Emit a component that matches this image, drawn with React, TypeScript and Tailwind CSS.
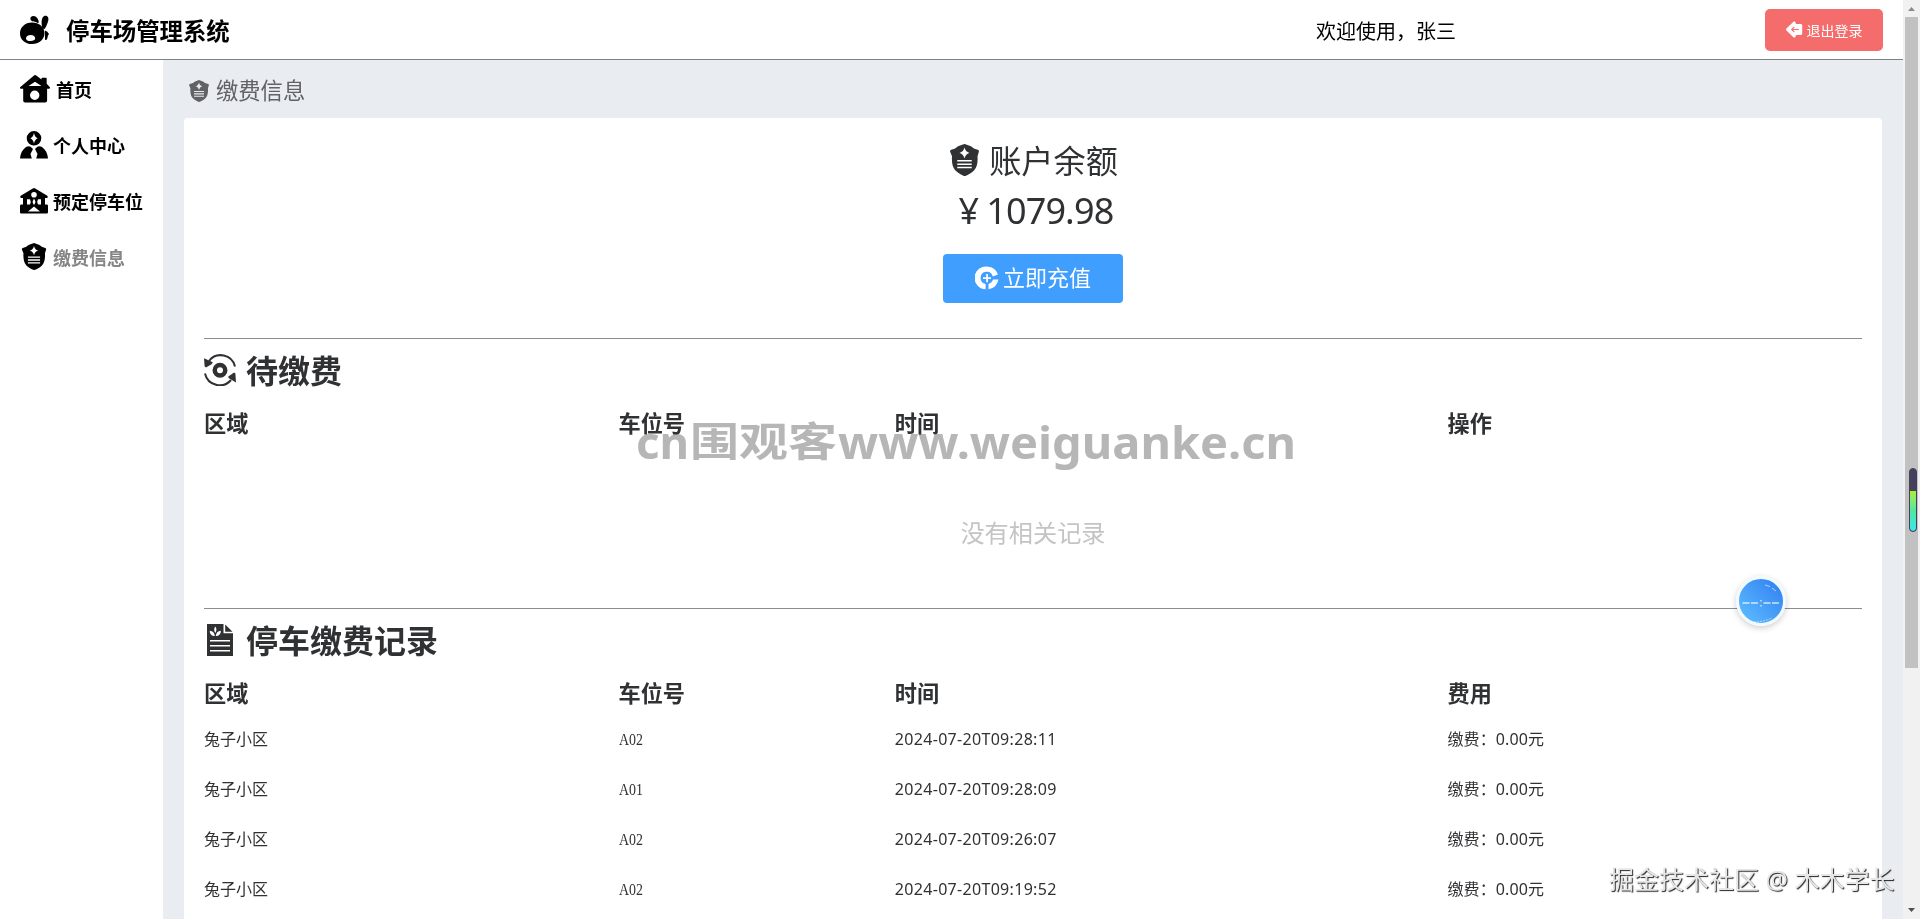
import type { ReactNode } from "react";

interface IconProps {
  className?: string;
}

const RabbitLogo = ({ className }: IconProps) => (
  <svg viewBox="0 0 30 30" className={className} fill="currentColor">
    <path d="M10.4 3.6C10.4 1.6 12 .8 13.7 1c2.600.3 4.600 2.600 5 5.400.1 1-.3 1.600-1 1.500l-2-1c-2-.3-5.300-.4-5.300-3.300Z" />
    <path d="M22.500 2.800C23.400.9 25.200.4 26.800 1c1.900.8 2.100 3.500 1 6.200-1 2.700-2 5.600-3.300 6.700-1.200.5-2.300-.7-2.600-2.700-.5-3-.4-6.300.6-8.400Z" />
    <path
      fillRule="evenodd"
      d="M12 7.500c7 0 12.500 4.700 12.500 10.800S19 29 12 29 0 24.500 0 18.400 5 7.500 12 7.500Zm-1.300 12.600c-2.800 0-4.700 1.500-4.700 3.400 0 1.600 2 2.600 4.600 2.600s4.600-1 4.600-2.500c0-2-1.700-3.500-4.500-3.500Z"
    />
    <path d="m25 15.500 2.300 1.200L29 19l-1 1.500-1 4-2 .5Z" />
  </svg>
);

const HomeIcon = ({ className }: IconProps) => (
  <svg viewBox="0 0 30 28" className={className} fill="currentColor">
    <path
      fillRule="evenodd"
      d="M14 .4a2 2 0 0 1 2.300 0l5.200 4V3.800c0-.6.4-1 1-1h3.200c.6 0 1 .4 1 1v5l3 3.200c.6.8.3 1.700-.6 1.700h-2v11.700c0 1.200-.8 2-2 2H5.200c-1.200 0-2-.8-2-2V13.700H.9c-1 0-1.200-1-.5-1.700ZM15 6.700l-6.500 4.200h13Zm-.3 8.800a4.700 4.700 0 1 0 0 9.400 4.700 4.700 0 0 0 0-9.400Z"
    />
  </svg>
);

const UserIcon = ({ className }: IconProps) => (
  <svg viewBox="0 0 28 28" className={className} fill="currentColor">
    <path
      fillRule="evenodd"
      d="M14 0a7.300 7.300 0 1 1 0 14.600A7.300 7.300 0 0 1 14 0Zm0 2c-.7 3-1.700 4.300-3.700 5.300 2 1 3 2.300 3.700 5.300.7-3 1.700-4.300 3.700-5.300-2-1-3-2.300-3.700-5.300Z"
    />
    <path d="M6 16c1.500-1 3.200-1.200 4.600-.3L13 18l-2.500 5 1.300 4.500H0C.3 22.500 2.500 18.500 6 16Z" />
    <path d="M22 16c-1.500-1-3.200-1.200-4.600-.3L15 18l2.500 5-1.300 4.500H28C27.700 22.500 25.500 18.500 22 16Z" />
  </svg>
);

const ParkingIcon = ({ className }: IconProps) => (
  <svg viewBox="0 0 28 26" className={className} fill="currentColor">
    <path
      fillRule="evenodd"
      d="M12.800.4a2.300 2.300 0 0 1 2.400 0l11.700 7.200c1.300.8 1 2.400-.4 2.500H25v6.500h1.500c1 0 1.500.5 1.500 1.500v6c0 1-.6 1.500-1.600 1.500H1.600C.6 25.600 0 25.100 0 24.100v-6c0-1 .5-1.500 1.500-1.500H3v-6.500H1.500C.1 10-.2 8.400 1.100 7.600ZM14 4a2.800 2.800 0 1 0 0 5.600A2.800 2.800 0 0 0 14 4ZM7 11.300v5.300h3l.8-2.600-.8-2.700Zm6.500 0-1 2.700 1 2.600h1l1-2.600-1-2.700Zm4.500 0-.8 2.700.8 2.600h3v-5.300ZM14 18.600l-6 5h12Z"
    />
  </svg>
);

const ShieldIcon = ({ className }: IconProps) => (
  <svg viewBox="0 0 28 31" className={className} fill="currentColor">
    <path
      fillRule="evenodd"
      d="M13.200.2a2 2 0 0 1 1.600 0l4.800 1.800c1.600.5 2.200 2 4 2.600l3.300 1c.9.300 1.200 1 1 1.900l-1.300 4.300c.4 5.800-.4 10.500-3.200 13.700-2.300 2.500-5.400 4.200-8 5.300-.9.300-1.500.3-2.400 0-2.500-1.100-5.600-2.800-8-5.300-2.700-3.200-3.500-7.900-3.100-13.700L.1 7.500c-.2-.9.1-1.600 1-1.900l3.300-1c1.800-.6 2.400-2.100 4-2.600ZM14 3.400c-.8 3-2 4.300-4.800 5.300 2.800 1 4 2.300 4.800 5.300.8-3 2-4.300 4.800-5.300-2.800-1-4-2.300-4.800-5.300ZM7 15.500V17h14v-1.500Zm0 3.300v1.500h14v-1.500Zm0 3.300v1.500h14v-1.500Z"
    />
  </svg>
);

const RechargeIcon = ({ className }: IconProps) => (
  <svg viewBox="0 0 24 24" className={className} fill="currentColor">
    <path d="M13.500.8A11.400 11.400 0 0 1 23 8.600l-5.200 1.800A6.200 6.200 0 1 0 10.600 18v5.300A11.400 11.400 0 1 1 13.500.8Z" />
    <path d="M23.400 13.600a11.400 11.400 0 0 1-9.900 9.700V18a6.200 6.200 0 0 0 4.500-4.400Z" />
    <path d="M11.200 8h1.700v3.200H16V13h-3.100v3.200h-1.700V13H8v-1.800h3.200Z" />
  </svg>
);

const LogoutIcon = ({ className }: IconProps) => (
  <svg viewBox="0 0 17 17" className={className}>
    <path
      fill="currentColor"
      d="M7.400.8C8.500-.1 9.500.5 9.700 2l.2.900h4.600c1 0 1.700.6 1.700 1.600v8c0 1-.7 1.600-1.700 1.600H9.900l-.2.900c-.2 1.500-1.200 2.100-2.300 1.200L.7 9.700C-.2 9-.2 8 .7 7.300Z"
    />
    <path d="M12.800 8.500H6M8.300 5.900 5.700 8.500l2.600 2.600" fill="none" stroke="#f56c6c" strokeWidth="1.200" />
  </svg>
);

const PendingIcon = ({ className }: IconProps) => (
  <svg viewBox="0 0 32 32" className={className} fill="currentColor">
    <path d="M5 7A14.700 14.700 0 0 1 31 12.500M1 19.500A15 15 0 0 0 27 26" fill="none" stroke="currentColor" strokeWidth="2" />
    <path d="M0 4.200 8.800 8.200 7.600 10.300 2 13.600.6 12.300ZM32 28.500 24.500 24l-.2-1.400 5.800-4 1.300.8Z" />
    <path fillRule="evenodd" d="M16 8.700a7.500 7.500 0 1 1 0 15 7.500 7.500 0 0 1 0-15Zm0 4.600a3 3 0 1 0 0 6 3 3 0 0 0 0-6Z" />
  </svg>
);

const RecordIcon = ({ className }: IconProps) => (
  <svg viewBox="0 0 26 32" className={className} fill="currentColor">
    <path
      fillRule="evenodd"
      d="M0 0h16.500v9.200H26V32H0Zm8.300 2.600c-1.500 2-1.500 4 0 6.300 1.500-2.300 1.500-4.300 0-6.300ZM2.800 6.700c-.2 3.200 1.700 5.200 5 5.300-.2-3-2-5.100-5-5.300Zm11 0c-3 .2-4.800 2.300-5 5.300 3.300-.1 5.200-2.100 5-5.300ZM3 16v1.400h20V16Zm0 5v1.400h20V21Zm0 5v1.400h20V26Z"
    />
    <path d="m18.200.5 7.300 7.200h-7.300Z" />
  </svg>
);

const menuItems = [
  { label: "首页", icon: HomeIcon, size: "w-[30px] h-7 -mt-[2px]", gap: "gap-[6px]" },
  { label: "个人中心", icon: UserIcon, size: "w-7 h-7 -mt-[2px]", gap: "gap-[5px]" },
  { label: "预定停车位", icon: ParkingIcon, size: "w-7 h-[26px] -mt-[2px]", gap: "gap-[5px]" },
  { label: "缴费信息", icon: ShieldIcon, size: "w-7 h-[27px] -mt-[3px]", gap: "gap-[5px]", active: true },
];

const records = [
  { area: "兔子小区", spot: "A02", time: "2024-07-20T09:28:11", fee: "0.00" },
  { area: "兔子小区", spot: "A01", time: "2024-07-20T09:28:09", fee: "0.00" },
  { area: "兔子小区", spot: "A02", time: "2024-07-20T09:26:07", fee: "0.00" },
  { area: "兔子小区", spot: "A02", time: "2024-07-20T09:19:52", fee: "0.00" },
];

const SectionTitle = ({ icon, children }: { icon: ReactNode; children: ReactNode }) => (
  <h2 className="flex h-[62px] items-center text-[32px] font-bold leading-none">
    <span className="mr-[10px] flex w-8 justify-center">{icon}</span>
    <span className="pt-px">{children}</span>
  </h2>
);

const TableHead = ({ titles }: { titles: string[] }) => (
  <div className="grid h-[42px] grid-cols-[6fr_4fr_8fr_6fr] items-center pt-[3px] text-[22.2px] font-bold">
    {titles.map((title) => (
      <span key={title}>{title}</span>
    ))}
  </div>
);

const Header = () => (
  <header className="flex h-[60px] shrink-0 items-center border-b border-[#7d828c] bg-white pl-5 pr-5 text-black">
    <RabbitLogo className="h-[30px] w-[30px]" />
    <h1 className="ml-4 pt-1 text-[23.4px] font-bold">停车场管理系统</h1>
    <span className="ml-auto pt-1 text-xl">欢迎使用，张三</span>
    <button className="ml-[309px] flex h-[42px] w-[118px] items-center justify-center gap-1 rounded-[5px] bg-[#f56c6c] text-sm text-white">
      <LogoutIcon className="h-[17px] w-[17px]" />
      <span className="pt-[2px]">退出登录</span>
    </button>
  </header>
);

const Sidebar = () => (
  <aside className="w-[163px] shrink-0 bg-white pl-5 pt-[2px] text-black">
    {menuItems.map((item) => (
      <a key={item.label} className={`flex h-14 items-center ${item.gap} whitespace-nowrap text-lg font-bold`}>
        <item.icon className={item.size} />
        <span className={item.active ? "text-[#858585]" : ""}>{item.label}</span>
      </a>
    ))}
  </aside>
);

const Scrollbar = () => (
  <div className="flex w-[17px] shrink-0 flex-col items-center bg-[#f1f1f1]">
    <svg viewBox="0 0 17 17" className="h-[17px] w-[17px]">
      <path d="M5 11h7L8.500 7Z" fill="#8b8b8b" />
    </svg>
    <div className="h-[651px] w-[13px] bg-[#c1c1c1]" />
    <svg viewBox="0 0 17 17" className="mt-auto h-[17px] w-[17px]">
      <path d="M5 6h7l-3.500 4Z" fill="#505050" />
    </svg>
  </div>
);

export default function App() {
  return (
    <div className="relative flex h-[919px] w-[1920px] overflow-hidden bg-white font-['Noto_Sans','Noto_Sans_CJK_SC',sans-serif] text-[#303133]">
      <div className="flex min-w-0 flex-1 flex-col">
        <Header />
        <div className="flex min-h-0 flex-1">
          <Sidebar />
          <main className="min-w-0 flex-1 bg-[#e9ecf0] px-[21px]">
            <div className="flex h-[58px] items-center pl-[5px] pt-1 text-[22.3px] text-[#606266]">
              <ShieldIcon className="-mt-px mr-[7px] h-[22px] w-5" />
              缴费信息
            </div>

            <section className="h-[900px] rounded bg-white px-5">
              {/* Balance */}
              <div className="flex h-[220px] flex-col items-center pt-[22px]">
                <div className="flex h-[42px] items-center gap-[10px] pl-[2px] text-[32.2px] leading-none">
                  <ShieldIcon className="-mt-[3px] h-8 w-[29px]" />
                  账户余额
                </div>
                <div className="mt-1 flex h-[50px] items-center gap-[7px] pl-[6px] text-[36px] leading-none">
                  <span>¥</span>
                  <span className="tracking-[-0.85px]">1079.98</span>
                </div>
                <button className="mt-[18px] flex h-[49px] w-[180px] items-center justify-center gap-1 rounded bg-[#409eff] pb-[2px] text-[22px] text-white">
                  <RechargeIcon className="h-6 w-6" />
                  立即充值
                </button>
              </div>

              {/* Pending payments */}
              <div className="h-[270px] border-t border-[#8d8d8d]">
                <SectionTitle icon={<PendingIcon className="h-8 w-8" />}>待缴费</SectionTitle>
                <TableHead titles={["区域", "车位号", "时间", "操作"]} />
                <p className="flex h-[180px] items-center justify-center text-[24.2px] text-[#c4c4c4]">没有相关记录</p>
              </div>

              {/* Payment history */}
              <div className="border-t border-[#8d8d8d]">
                <SectionTitle icon={<RecordIcon className="h-8 w-[26px]" />}>停车缴费记录</SectionTitle>
                <TableHead titles={["区域", "车位号", "时间", "费用"]} />
                <div className="pt-px">
                  {records.map((record) => (
                    <div key={record.time} className="grid h-[50px] grid-cols-[6fr_4fr_8fr_6fr] items-center text-base">
                      <span>{record.area}</span>
                      <span className="origin-left scale-x-[0.87] pt-px font-['Liberation_Serif',serif]">{record.spot}</span>
                      <span className="tracking-[0.31px]">{record.time}</span>
                      <span className="tracking-[0.1px]">缴费：{record.fee}元</span>
                    </div>
                  ))}
                </div>
              </div>
            </section>
          </main>
        </div>
      </div>
      <Scrollbar />

      {/* Level gauge over the scrollbar */}
      <div className="absolute left-[1909px] top-[468px] h-16 w-2 overflow-hidden rounded-full border border-[#45405c] bg-[#45405c]">
        <div className="mt-[22px] h-10 rounded-b-full bg-gradient-to-b from-[#a6f02c] via-[#4fe6a0] to-[#38e8ee]" />
      </div>

      {/* Floating assistant ball */}
      <div className="absolute left-[1736px] top-[576px] h-[50px] w-[50px] rounded-full border-[3px] border-[#f1fbff] bg-gradient-to-tr from-[#62bfff] to-[#2f7df0] shadow-[0_2px_6px_rgba(0,0,0,0.2)]">
        <svg viewBox="0 0 44 44" className="h-full w-full" fill="none" stroke="#fff">
          <path d="M3.500 24h16M24.500 24h16" strokeWidth="1.500" strokeDasharray="7 1.500" opacity=".75" />
          <path d="M22 21v1.500M22 26v1.500" strokeWidth="1.500" opacity=".7" />
          <path d="m26 6 5 1.500M33 9l4 3" strokeWidth="1" opacity=".6" />
          <path d="M15 43q9 0 18-4" strokeWidth="1" strokeDasharray="2 1" opacity=".5" />
        </svg>
      </div>

      {/* Watermarks */}
      <svg
        className="pointer-events-none absolute left-[630px] top-[400px] overflow-visible mix-blend-multiply"
        width="680"
        height="80"
        fill="#b6b6b6"
        fontWeight="700"
      >
        <text x="6" y="59" fontSize="44" fontFamily="Noto Sans, sans-serif" textLength="53" lengthAdjust="spacingAndGlyphs">cn</text>
        <text x="60" y="56" fontSize="40" fontFamily="Noto Sans CJK SC, sans-serif" textLength="147" lengthAdjust="spacingAndGlyphs">围观客</text>
        <text x="208" y="59" fontSize="44" fontFamily="Noto Sans, sans-serif" textLength="458" lengthAdjust="spacingAndGlyphs">www.weiguanke.cn</text>
      </svg>
      <div className="pointer-events-none absolute left-[1609px] top-[861px] whitespace-nowrap text-[25px] leading-9 text-[#e6e6e6] [text-shadow:1px_1px_1px_#222]">
        掘金技术社区 @ 木木学长
      </div>
    </div>
  );
}
